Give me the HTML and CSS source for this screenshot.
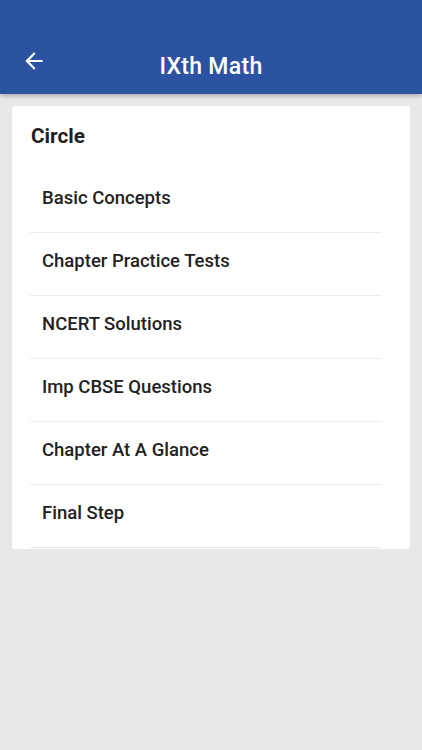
FILE: index.html
```html
<!DOCTYPE html>
<html>
<head>
<meta charset="utf-8">
<link rel="stylesheet" href="styles.css">
</head>
<body>
<header class="appbar">
  <svg class="back" width="26" height="26" viewBox="0 0 24 24"><path d="M20 11H7.83l5.59-5.59L12 4l-8 8 8 8 1.41-1.41L7.83 13H20v-2z" fill="#fff"/></svg>
  <h1 class="title">IXth Math</h1>
</header>
<main class="content">
  <section class="card">
    <h2 class="card-title">Circle</h2>
    <ul class="list">
      <li class="item">Basic Concepts</li>
      <li class="item">Chapter Practice Tests</li>
      <li class="item">NCERT Solutions</li>
      <li class="item">Imp CBSE Questions</li>
      <li class="item">Chapter At A Glance</li>
      <li class="item">Final Step</li>
    </ul>
  </section>
</main>
</body>
</html>
```
FILE: styles.css
```css
html, body { margin: 0; padding: 0; }
body {
  background: #e8e8e8;
  font-family: Roboto, "Liberation Sans", sans-serif;
  width: 422px;
  height: 750px;
  overflow: hidden;
}
.appbar {
  position: relative;
  height: 94px;
  background: #2c53a2;
  box-shadow: 0 2px 4px rgba(0,0,0,0.25);
  display: flex;
  align-items: flex-end;
  justify-content: center;
  box-sizing: border-box;
  padding-bottom: 14px;
}
.back {
  position: absolute;
  left: 21px;
  top: 48px;
}
.title {
  margin: 0;
  color: #fff;
  font-size: 23px;
  font-weight: 500;
  letter-spacing: 0.3px;
}
.content {
  padding: 12px 12px;
}
.card {
  background: #fff;
  border-radius: 3px;
  padding: 0 28px 0 18px;
  height: 443px;
  box-sizing: border-box;
  overflow: hidden;
}
.card-title {
  margin: 0;
  padding: 18px 0 0 1px;
  height: 64px;
  box-sizing: border-box;
  font-size: 20.7px;
  font-weight: 700;
  color: #212121;
}
.list {
  list-style: none;
  margin: 0;
  padding: 0;
}
.item {
  height: 63px;
  box-sizing: border-box;
  border-bottom: 1px solid #ececec;
  padding: 17px 0 0 12px;
  font-size: 18.5px;
  font-weight: 500;
  color: #222;
}
```
